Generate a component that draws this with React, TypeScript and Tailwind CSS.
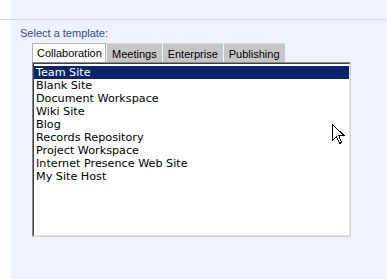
const templates = [
  "Team Site",
  "Blank Site",
  "Document Workspace",
  "Wiki Site",
  "Blog",
  "Records Repository",
  "Project Workspace",
  "Internet Presence Web Site",
  "My Site Host",
];

const tabs = ["Collaboration", "Meetings", "Enterprise", "Publishing"];

const Cursor = () => (
  <svg
    className="absolute left-[332px] top-[124px]"
    width="13"
    height="21"
    viewBox="0 0 13 21"
  >
    <path
      d="M0.5 0.5 L0.5 16.5 L4.5 12.5 L7.5 19.5 L9.5 18.5 L6.8 11.5 L12 11.5 Z"
      fill="#ffffff"
      stroke="#000000"
      strokeWidth="1"
      shapeRendering="crispEdges"
    />
  </svg>
);

const App = () => {
  return (
    <div className="relative w-[387px] h-[279px] overflow-hidden bg-white flex flex-col font-['Liberation_Sans',Arial,sans-serif]">
      <div className="flex h-[19px]">
        <div className="w-[11px] bg-white" />
        <div className="flex-1 bg-[#eef1fe]" />
      </div>
      <div className="h-px bg-[#d6d8e0]" />
      <div className="flex flex-1">
        <div className="w-[11px] bg-white" />
        <div className="flex-1 bg-[#eef1fe] pl-[9px] pt-[7px]">
          <p className="text-[11px] leading-[13px] text-[#2b4f8e]">Select a template:</p>
          <div className="ml-[12px] mt-[3px] flex h-[19px] items-stretch">
            {tabs.map((t, i) => (
              <div
                key={t}
                className={
                  i === 0
                    ? "px-[4px] pt-[2px] text-[11px] leading-[14px] text-black bg-white border border-b-0 border-[#b4b4b4] w-[74px]"
                    : "px-[5px] pt-[3px] text-[11px] leading-[14px] text-black bg-[#c6c6c6] border-t border-l border-t-[#d8d8d8] border-l-[#eef1fe]"
                }
              >
                {t}
              </div>
            ))}
          </div>
          <div className="ml-[12px] w-[319px] h-[175px] border border-t-[#8a8a8a] border-l-[#8a8a8a] border-b-[#d4d4d4] border-r-[#d4d4d4]">
            <div className="h-full pt-[2px] border border-t-[#404040] border-l-[#404040] border-b-[#e4e4e4] border-r-[#e4e4e4] bg-white font-['DejaVu_Sans',Verdana,sans-serif] text-[11.2px] leading-[13px]">
              {templates.map((t, i) => (
                <div
                  key={t}
                  className={
                    i === 0
                      ? "h-[13px] pl-[2px] bg-[#0a246a] text-white whitespace-nowrap"
                      : "h-[13px] pl-[2px] text-black whitespace-nowrap"
                  }
                >
                  {t}
                </div>
              ))}
            </div>
          </div>
        </div>
      </div>
      <Cursor />
    </div>
  );
};

export default App;
